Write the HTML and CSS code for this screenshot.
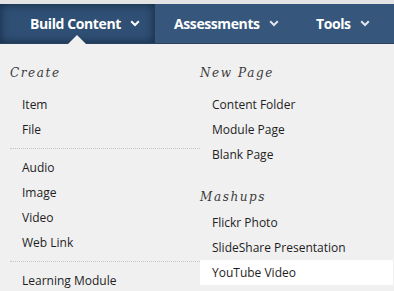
FILE: index.html
```html
<!DOCTYPE html>
<html>
<head>
<meta charset="utf-8">
<link rel="stylesheet" href="styles.css">
</head>
<body>
<div class="topstrip"></div>
<nav class="navbar">
  <div class="tab active">
    <span class="tab-label">Build Content</span>
    <svg class="chev" width="10" height="7" viewBox="0 0 10 7"><path d="M1.2 1.3 L5 5 L8.8 1.3" fill="none" stroke="#fff" stroke-width="2"/></svg>
    <span class="notch"></span>
  </div>
  <div class="tab t2">
    <span class="tab-label">Assessments</span>
    <svg class="chev" width="10" height="7" viewBox="0 0 10 7"><path d="M1.2 1.3 L5 5 L8.8 1.3" fill="none" stroke="#dfe6ee" stroke-width="2"/></svg>
  </div>
  <div class="tab t3">
    <span class="tab-label">Tools</span>
    <svg class="chev" width="10" height="7" viewBox="0 0 10 7"><path d="M1.2 1.3 L5 5 L8.8 1.3" fill="none" stroke="#dfe6ee" stroke-width="2"/></svg>
  </div>
</nav>
<div class="menu">
  <div class="col left">
    <h3 class="heading">Create</h3>
    <ul class="items">
      <li>Item</li>
      <li>File</li>
    </ul>
    <div class="divider"></div>
    <ul class="items">
      <li>Audio</li>
      <li>Image</li>
      <li>Video</li>
      <li>Web Link</li>
    </ul>
    <div class="divider"></div>
    <ul class="items">
      <li>Learning Module</li>
    </ul>
  </div>
  <div class="col right">
    <h3 class="heading">New Page</h3>
    <ul class="items">
      <li>Content Folder</li>
      <li>Module Page</li>
      <li>Blank Page</li>
    </ul>
    <h3 class="heading second">Mashups</h3>
    <ul class="items tight">
      <li>Flickr Photo</li>
      <li>SlideShare Presentation</li>
      <li class="hover">YouTube Video</li>
    </ul>
  </div>
</div>
</body>
</html>
```
FILE: styles.css
```css
* { box-sizing: border-box; }
html, body { margin: 0; padding: 0; }
body {
  width: 394px;
  height: 291px;
  overflow: hidden;
  background: #f0f0f0;
  font-family: "Open Sans", "DejaVu Sans", sans-serif;
}
.topstrip {
  height: 4px;
  background: #e4e4e4;
}
.navbar {
  height: 40px;
  display: flex;
  background: #36577b;
  border-bottom: 1px solid #2a4260;
}
.tab {
  position: relative;
  display: flex;
  align-items: center;
  color: #fff;
  font-weight: 700;
  font-size: 14px;
  letter-spacing: -0.4px;
}
.tab.active {
  width: 155px;
  padding-left: 30px;
  background: #2f4f74;
  box-shadow: inset 0 0 10px rgba(10, 25, 45, 0.7);
  border-right: 1px solid #243a55;
}
.tab.t2 { padding-left: 19px; width: 140px; }
.tab.t3 { padding-left: 21px; }
.tab-label { display: block; }
.chev { margin-left: 9px; }
.notch {
  position: absolute;
  left: 68px;
  bottom: -1px;
  width: 0;
  height: 0;
  border-left: 9px solid transparent;
  border-right: 9px solid transparent;
  border-bottom: 9px solid #f0f0f0;
}
.menu {
  display: flex;
  padding-top: 16px;
}
.col.left { width: 190px; margin-left: 10px; }
.col.right { flex: 1; margin-right: 1px; }
.heading {
  margin: 1px 0 6px 0;
  height: 25px;
  line-height: 25px;
  font-family: "DejaVu Serif", "Liberation Serif", serif;
  font-style: italic;
  font-weight: 400;
  font-size: 12px;
  letter-spacing: 1.6px;
  color: #3b3b3b;
}
.heading.second { margin: 18px 0 0 0; }
.items {
  list-style: none;
  margin: 0;
  padding: 0;
}
.items li {
  height: 25px;
  line-height: 25px;
  padding-left: 12px;
  font-size: 12px;
  color: #1e1e1e;
}
.items li.hover { background: #fff; }
.divider {
  margin: 6px 0;
  border-top: 1px dotted #c4c4c4;
}
```
